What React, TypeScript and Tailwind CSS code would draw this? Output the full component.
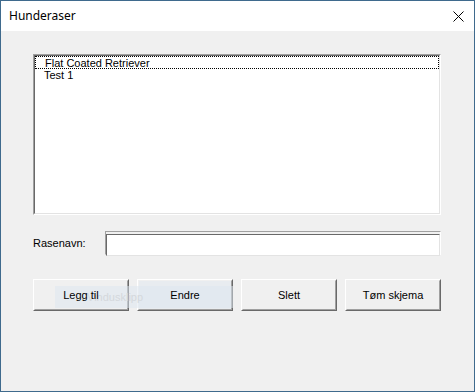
import React, { useState } from 'react';

// Classic Windows dialog: "Hunderaser"
const breeds = ['Flat Coated Retriever', 'Test 1'];

function RaisedButton({ label, tinted }: { label: string; tinted?: boolean }) {
  return (
    <div className="w-[96px] h-[32px] border border-t-white border-l-white border-r-[#696969] border-b-[#696969]">
      <div
        className={`h-full w-full border border-t-[#f0f0f0] border-l-[#f0f0f0] border-r-[#a0a0a0] border-b-[#a0a0a0] flex items-center justify-center text-[11px] text-black ${
          tinted ? 'bg-[#e8ecf0]' : 'bg-[#f0f0f0]'
        }`}
      >
        <span className="relative z-10">{label}</span>
      </div>
    </div>
  );
}

export default function App() {
  const [selected] = useState(0);
  const [name, setName] = useState('');

  return (
    <div
      className="w-[475px] h-[392px] border border-[#3f6a8d] bg-[#f0f0f0] flex flex-col"
      style={{ fontFamily: '"Liberation Sans", Arial, sans-serif' }}
    >
      {/* Title bar */}
      <div className="h-[30px] bg-white flex items-center justify-between pl-[8px] pr-[10px] shrink-0">
        <span className="text-[12px] text-black" style={{ fontFamily: '"Noto Sans", sans-serif' }}>
          Hunderaser
        </span>
        <svg width="11" height="11" viewBox="0 0 11 11" className="mt-[1px]">
          <path d="M0.5 0.5 L10.5 10.5 M10.5 0.5 L0.5 10.5" stroke="#000" strokeWidth="1" />
        </svg>
      </div>

      {/* Body */}
      <div className="relative flex-1 pl-[32px] pt-[23px]">
        {/* List box */}
        <div className="w-[408px] h-[161px] border border-t-[#a0a0a0] border-l-[#a0a0a0] border-r-white border-b-white">
          <div className="h-full w-full border border-t-[#696969] border-l-[#696969] border-r-[#e3e3e3] border-b-[#e3e3e3] bg-white">
            {breeds.map((b, i) => (
              <div
                key={b}
                className={`h-[13px] leading-[13px] pl-[9px] text-[11px] text-black ${
                  i === selected ? 'border border-dotted border-black pl-[8px] leading-[12px]' : ''
                }`}
              >
                {b}
              </div>
            ))}
          </div>
        </div>

        {/* Name row */}
        <div className="flex items-center mt-[16px] w-[408px]">
          <span className="w-[72px] text-[11px] text-black">Rasenavn:</span>
          <div className="w-[336px] h-[24px] border border-t-[#a0a0a0] border-l-[#a0a0a0] border-r-white border-b-white">
            <input
              value={name}
              onChange={e => setName(e.target.value)}
              className="h-full w-full border border-t-[#696969] border-l-[#696969] border-r-[#e3e3e3] border-b-[#e3e3e3] bg-white outline-none text-[11px] px-1"
            />
          </div>
        </div>

        {/* Buttons */}
        <div className="flex gap-[8px] mt-[24px]">
          <RaisedButton label="Legg til" />
          <RaisedButton label="Endre" tinted />
          <RaisedButton label="Slett" />
          <RaisedButton label="Tøm skjema" />
        </div>

        {/* Snipping tool hint lying over the buttons, under their labels */}
        <div className="absolute z-[5] left-[54px] top-[255px] w-[178px] h-[22px] bg-[#dce6f0]/50 pointer-events-none flex items-center pl-[32px]">
          <span className="text-[11px] text-[#d4d8dc]">Vindusklipp</span>
        </div>
      </div>
    </div>
  );
}
